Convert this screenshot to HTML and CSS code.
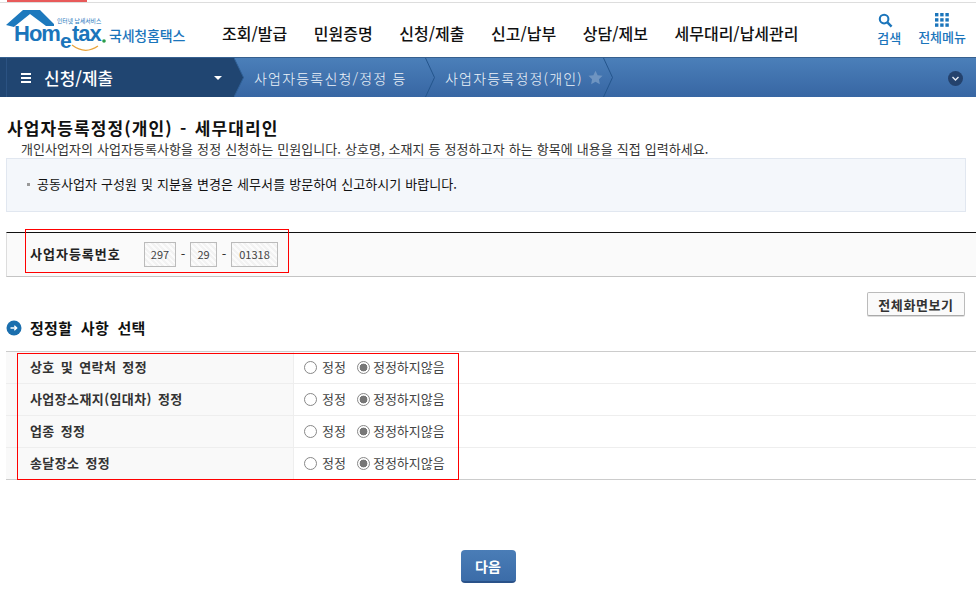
FILE: index.html
```html
<!DOCTYPE html>
<html lang="ko">
<head>
<meta charset="utf-8">
<title>사업자등록정정(개인)</title>
<link rel="stylesheet" href="styles.css">
</head>
<body>
<div class="strip"><span class="strip-red"></span></div>
<header class="header">
  <a class="logo">
    <svg class="logo-art" width="108" height="54" viewBox="0 0 108 54">
      <path d="M6 22 L23 7 L40 7 L54 21 L54 23 L46 23 L30 11 L15 23 L14 24 Z" fill="#1d79bd"/>
      <path d="M72 42 Q85 52 98 43" fill="none" stroke="#e9a33a" stroke-width="1.2"/>
      <circle cx="104" cy="38" r="1.8" fill="#2a9d4a"/>
      <text class="logo-small" x="57" y="20">인터넷 납세서비스</text>
      <text class="logo-home" x="14" y="38">Hom</text>
      <text class="logo-e" x="60" y="45">e</text>
      <text class="logo-home" x="72" y="38">tax</text>
    </svg>
    <span class="logo-name">국세청홈택스</span>
  </a>
  <nav class="gnb">
    <a>조회/발급</a><a>민원증명</a><a>신청/제출</a><a>신고/납부</a><a>상담/제보</a><a>세무대리/납세관리</a>
  </nav>
  <div class="tools">
    <a class="tool tool-search">
      <svg width="15" height="15" viewBox="0 0 16 16"><circle cx="6.5" cy="6.5" r="4.6" fill="none" stroke="#1b75bb" stroke-width="2.2"/><path d="M10 10 L14.5 14.5" stroke="#1b75bb" stroke-width="2.6"/></svg>
      <span>검색</span>
    </a>
    <a class="tool tool-menu">
      <svg width="14" height="14" viewBox="0 0 14 14" fill="#1b75bb"><rect width="3.4" height="3.4"/><rect x="5.2" width="3.4" height="3.4"/><rect x="10.4" width="3.4" height="3.4"/><rect y="5.2" width="3.4" height="3.4"/><rect x="5.2" y="5.2" width="3.4" height="3.4"/><rect x="10.4" y="5.2" width="3.4" height="3.4"/><rect y="10.4" width="3.4" height="3.4"/><rect x="5.2" y="10.4" width="3.4" height="3.4"/><rect x="10.4" y="10.4" width="3.4" height="3.4"/></svg>
      <span>전체메뉴</span>
    </a>
  </div>
</header>
<div class="bar">
  <div class="bar-root">
    <span class="burger"><i></i><i></i><i></i></span>
    <span class="bar-title">신청/제출</span>
    <span class="caret"></span>
    <svg class="chev" width="12" height="39" viewBox="0 0 12 39"><path d="M0 0 L9.5 19.5 L0 39 Z" fill="#204571"/><path d="M0 0 L9.5 19.5 L0 39" fill="none" stroke="#2f5f95" stroke-width="1"/></svg>
  </div>
  <div class="crumb crumb-a">사업자등록신청/정정 등
    <svg class="chev" width="12" height="39" viewBox="0 0 12 39"><path d="M0.5 0 L9.5 19.5 L0.5 39" fill="none" stroke="#24558c" stroke-width="1"/></svg>
  </div>
  <div class="crumb crumb-b">사업자등록정정(개인)
    <svg class="star" width="15" height="15" viewBox="0 0 24 24"><path d="M12 1 L15.4 8.3 L23.4 9.3 L17.5 14.8 L19 22.7 L12 18.8 L5 22.7 L6.5 14.8 L.6 9.3 L8.6 8.3 Z" fill="#6e94c1"/></svg>
    <svg class="chev" width="12" height="39" viewBox="0 0 12 39"><path d="M0.5 0 L9.5 19.5 L0.5 39" fill="none" stroke="#24558c" stroke-width="1"/></svg>
  </div>
  <span class="bar-more">
    <svg width="15" height="15" viewBox="0 0 15 15"><circle cx="7.5" cy="7.5" r="7.5" fill="#24426d"/><path d="M4.5 6 L7.5 9 L10.5 6" fill="none" stroke="#e5ebf3" stroke-width="1.4"/></svg>
  </span>
</div>
<main class="main">
  <h1 class="page-title">사업자등록정정(개인) - 세무대리인</h1>
  <p class="page-desc">개인사업자의 사업자등록사항을 정정 신청하는 민원입니다. 상호명, 소재지 등 정정하고자 하는 항목에 내용을 직접 입력하세요.</p>
  <div class="notice"><span class="bullet"></span>공동사업자 구성원 및 지분율 변경은 세무서를 방문하여 신고하시기 바랍니다.</div>
  <section class="id-row">
    <span class="id-label">사업자등록번호</span>
    <span class="field f1">297</span><span class="dash">-</span>
    <span class="field f2">29</span><span class="dash">-</span>
    <span class="field f3">01318</span>
    <span class="mark mark-id"></span>
  </section>
  <div class="view-row"><button class="view-btn">전체화면보기</button></div>
  <h2 class="section-title">
    <svg width="16" height="16" viewBox="0 0 16 16"><circle cx="8" cy="8" r="7.5" fill="#1b6fae"/><path d="M4.5 8 H10.5 M8.3 5.8 L10.7 8 L8.3 10.2" fill="none" stroke="#fff" stroke-width="1.3"/></svg>
    정정할 사항 선택
  </h2>
  <div class="table">
    <div class="row"><div class="cell-label">상호 및 연락처 정정</div><div class="cell-opts"><span class="radio"></span><span class="opt">정정</span><span class="radio on"></span><span>정정하지않음</span></div></div>
    <div class="row"><div class="cell-label">사업장소재지(임대차) 정정</div><div class="cell-opts"><span class="radio"></span><span class="opt">정정</span><span class="radio on"></span><span>정정하지않음</span></div></div>
    <div class="row"><div class="cell-label">업종 정정</div><div class="cell-opts"><span class="radio"></span><span class="opt">정정</span><span class="radio on"></span><span>정정하지않음</span></div></div>
    <div class="row"><div class="cell-label">송달장소 정정</div><div class="cell-opts"><span class="radio"></span><span class="opt">정정</span><span class="radio on"></span><span>정정하지않음</span></div></div>
    <span class="mark mark-table"></span>
  </div>
  <div class="next-row"><button class="next-btn">다음</button></div>
</main>
</body>
</html>
```
FILE: styles.css
```css
* { box-sizing: border-box; }
html, body { margin: 0; padding: 0; }
body {
  width: 976px;
  height: 589px;
  overflow: hidden;
  background: #fff;
  color: #222;
  font-family: "Noto Sans CJK KR", "Noto Sans", sans-serif;
  font-size: 13px;
}
a { color: inherit; text-decoration: none; }

.strip { position: relative; height: 3px; border-bottom: 1px solid #ddd; }
.strip-red { position: absolute; left: 7px; top: 0; width: 80px; height: 2px; background: #e85a5a; }

.header { display: flex; align-items: center; height: 54px; position: relative; }
.logo { display: flex; align-items: flex-start; width: 222px; height: 54px; flex: none; }
.logo-art { flex: none; margin-right: 1px; }
.logo-small { font-size: 5.8px; fill: #1b75bb; }
.logo-home { font-family: "Liberation Sans", sans-serif; font-size: 22px; font-weight: 700; fill: #1b75bb; letter-spacing: -1px; }
.logo-e { font-family: "Liberation Sans", sans-serif; font-size: 21px; font-weight: 700; fill: #1b75bb; }
.logo-name { font-size: 14px; font-weight: 500; color: #1b75bb; letter-spacing: -.2px; line-height: 18px; margin-top: 23px; white-space: nowrap; }

.gnb { display: flex; gap: 26.6px; flex: none; font-size: 16px; font-weight: 500; color: #111; white-space: nowrap; line-height: 20px; padding-top: 5px; }

.tools { margin-left: auto; display: flex; gap: 17px; padding-right: 10px; margin-top: -2px; }
.tool { display: flex; flex-direction: column; align-items: center; gap: 2px; color: #1b75bb; font-size: 13px; font-weight: 500; line-height: 15px; white-space: nowrap; }
.tool svg { display: block; }
.tool-search svg { align-self: flex-start; margin-left: 1px; }

.bar { display: flex; align-items: stretch; height: 40px; background: linear-gradient(#4b7fb9, #3766a3); color: #fff; position: relative; border-top: 1px solid #36608f; }
.bar-root { position: relative; display: flex; align-items: center; width: 234px; height: 100%; background: #204571; flex: none; padding-left: 6px; }
.bar-root::before { content: ""; position: absolute; left: 6px; top: 0; width: 1px; height: 100%; background: #2b5282; }
.burger { display: flex; flex-direction: column; gap: 2px; width: 10px; margin-left: 15px; }
.burger i { display: block; height: 2px; background: #fff; }
.bar-title { margin-left: 13px; font-size: 17px; font-weight: 500; }
.caret { position: absolute; right: 12px; top: 18px; border: 4px solid transparent; border-top: 4px solid #fff; border-bottom: 0; }
.chev { position: absolute; top: 0; left: 100%; display: block; }
.crumb { position: relative; display: flex; align-items: center; font-size: 14px; font-weight: 300; color: #eef3f9; letter-spacing: 1.2px; white-space: nowrap; }
.crumb-a { margin-left: 20px; width: 171px; }
.crumb-b { margin-left: 20px; width: 158px; }
.star { margin-left: 5px; flex: none; }
.bar-more { position: absolute; right: 13px; top: 13px; line-height: 0; }

.main { padding: 0 0 0 6px; }
.page-title { margin: 0; padding: 21px 0 0 1px; font-size: 17px; line-height: 20px; font-weight: 700; color: #111; letter-spacing: 1.1px; word-spacing: 1.5px; }
.page-desc { margin: 2px 0 0; padding-left: 15px; font-size: 13px; line-height: 18px; height: 20px; color: #333; white-space: nowrap; letter-spacing: .05px; word-spacing: .3px; }
.notice { display: flex; align-items: center; width: 960px; height: 54px; background: #f4f7fb; border: 1px solid #e1e7f0; padding: 0 0 3px 20px; font-size: 13px; color: #111; margin-top: -2px; white-space: nowrap; letter-spacing: .05px; word-spacing: .3px; }
.bullet { width: 3px; height: 3px; background: #999; margin-right: 7px; margin-top: 1px; flex: none; }

.id-row { position: relative; display: flex; align-items: center; height: 45px; margin-top: 20px; background: #fafafa; border-top: 1px solid #111; border-bottom: 1px solid #c4c4c4; border-left: 1px solid #ddd; padding-left: 23px; font-size: 13px; }
.id-label { width: 114px; font-weight: 700; color: #222; letter-spacing: 1px; padding-bottom: 2px; }
.field { display: flex; align-items: center; justify-content: center; height: 25px; border: 1px solid #bbb; font-size: 11px; color: #444; padding-bottom: 2px; background: repeating-linear-gradient(45deg, #f2f2f2, #f2f2f2 2px, #fbfbfb 2px, #fbfbfb 4px); }
.f1 { width: 32px; }
.f2 { width: 27px; }
.f3 { width: 47px; }
.dash { width: 14px; text-align: center; color: #333; padding-bottom: 2px; }
.mark { position: absolute; border: 1px solid #f00; pointer-events: none; }
.mark-id { left: 18px; top: -4px; width: 264px; height: 44px; }

.view-row { display: flex; justify-content: flex-end; padding-right: 11px; margin-top: 15px; height: 24px; }
.view-btn { width: 98px; height: 24px; padding: 0; border: 1px solid #bbb; border-bottom-color: #aaa; border-radius: 2px; background: #fafafa; font: 700 13px/1 "Noto Sans CJK KR", sans-serif; color: #333; letter-spacing: .6px; box-shadow: 0 1px 0 #ddd; }
.section-title { display: flex; align-items: center; gap: 8px; margin: 0; height: 24px; font-size: 15px; line-height: 20px; font-weight: 700; color: #111; letter-spacing: .3px; word-spacing: 4px; }
.section-title svg { flex: none; }

.table { position: relative; margin-top: 11px; border-top: 1px solid #ccc; border-bottom: 1px solid #ccc; }
.row { display: flex; height: 32px; border-top: 1px solid #eee; }
.row:first-child { border-top: 0; height: 31px; }
.cell-label { width: 288px; padding: 0 0 2px 24px; display: flex; align-items: center; background: #f9f9f9; border-right: 1px solid #eee; font-weight: 700; font-size: 13px; color: #333; letter-spacing: .4px; word-spacing: 2px; }
.cell-opts { display: flex; align-items: center; padding: 0 0 0 10px; font-size: 13px; color: #444; }
.radio { width: 13px; height: 13px; border: 1px solid #888; border-radius: 50%; background: #fff; margin-right: 5px; flex: none; }
.radio.on { margin-right: 3px; background: radial-gradient(circle, #777 0 3.6px, #fff 4.2px); }
.opt { margin-right: 11px; padding-bottom: 2px; }
.cell-opts span:last-child { padding-bottom: 2px; }
.mark-table { left: 11px; top: 1px; width: 442px; height: 127px; }

.next-row { display: flex; justify-content: center; margin-top: 70px; padding-right: 6px; }
.next-btn { width: 55px; height: 33px; padding: 0; border: 0; border-bottom: 2px solid #2a5289; border-radius: 4px; background: linear-gradient(#4a7db7, #3b6ca8); color: #fff; font: 700 14px/1 "Noto Sans CJK KR", sans-serif; }
```
